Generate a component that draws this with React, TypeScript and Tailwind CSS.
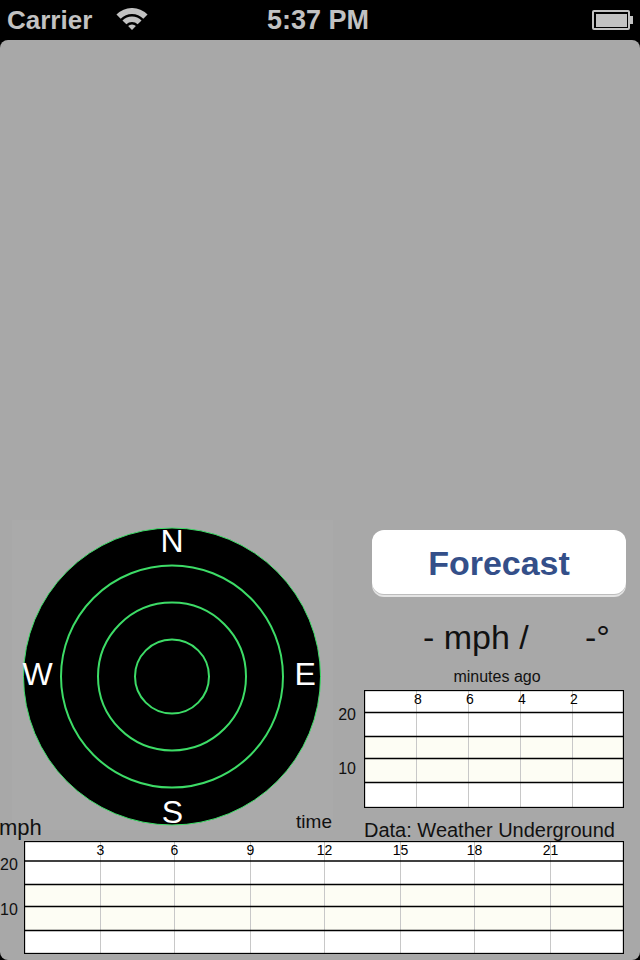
import React from "react";

function Wifi() {
  return (
    <svg width="32" height="22" viewBox="0 0 32 22" className="ml-[24px] mt-[-2px]">
      <path d="M0.44 6.44 A22 22 0 0 1 31.56 6.44 L27.31 10.69 A16 16 0 0 0 4.69 10.69 Z" fill="#c2c2c2" />
      <path d="M6.45 12.45 A13.5 13.5 0 0 1 25.55 12.45 L21.66 16.34 A8 8 0 0 0 10.34 16.34 Z" fill="#c2c2c2" />
      <path d="M16 22 L12.11 18.11 A5.5 5.5 0 0 1 19.89 18.11 Z" fill="#c2c2c2" />
    </svg>
  );
}

function Battery() {
  return (
    <div className="flex items-center mr-[7px]">
      <div className="w-[38px] h-[20px] border-2 border-[#c2c2c2] rounded-[2px] p-[1.5px]">
        <div className="w-full h-full bg-[#c2c2c2]" />
      </div>
      <div className="w-[3px] h-[8px] bg-[#c2c2c2]" />
    </div>
  );
}

function Compass() {
  const green = "#3ddc67";
  return (
    <svg width="321" height="310" viewBox="0 0 321 310" className="block">
      <circle cx="160" cy="156.5" r="148.5" fill="#000" stroke={green} strokeWidth="1" />
      <circle cx="160" cy="156.5" r="111" fill="none" stroke={green} strokeWidth="2" />
      <circle cx="160" cy="156.5" r="74" fill="none" stroke={green} strokeWidth="2" />
      <circle cx="160" cy="156.5" r="37" fill="none" stroke={green} strokeWidth="2" />
      <g fill="#fff" fontFamily="'Liberation Sans', Arial, sans-serif" fontSize="32">
        <text x="160" y="32" textAnchor="middle">N</text>
        <text x="10.5" y="165">W</text>
        <text x="282.5" y="165">E</text>
        <text x="160.5" y="302.5" textAnchor="middle">S</text>
      </g>
    </svg>
  );
}

function SmallChart() {
  const vx = [52.5, 104.5, 156.5, 208.5];
  const labels = ["8", "6", "4", "2"];
  const hy = [22.5, 46.5, 68.5, 92.5];
  return (
    <svg width="260" height="118" viewBox="0 0 260 118" className="block">
      <rect x="0.5" y="0.5" width="259" height="117" fill="#fff" />
      <rect x="1" y="46.5" width="258" height="46" fill="#fdfdf4" />
      {vx.map((x) => (
        <line key={x} x1={x} y1="1" x2={x} y2="117" stroke="#c8c8c8" strokeWidth="1" />
      ))}
      {hy.map((y) => (
        <line key={y} x1="0" y1={y} x2="260" y2={y} stroke="#000" strokeWidth="1.3" />
      ))}
      <rect x="0.5" y="0.5" width="259" height="117" fill="none" stroke="#000" strokeWidth="1.3" />
      <g fill="#000" fontFamily="'Liberation Sans', Arial, sans-serif" fontSize="14">
        {vx.map((x, i) => (
          <text key={x} x={x + 1.5} y="14" textAnchor="middle">
            {labels[i]}
          </text>
        ))}
      </g>
    </svg>
  );
}

function BigChart() {
  const vx = [76.5, 150.5, 226.5, 300.5, 376.5, 450.5, 526.5];
  const labels = ["3", "6", "9", "12", "15", "18", "21"];
  const hy = [20, 43.5, 65.5, 89.5];
  return (
    <svg width="600" height="113" viewBox="0 0 600 113" className="block">
      <rect x="0.5" y="0.5" width="599" height="112" fill="#fff" />
      <rect x="1" y="43.5" width="598" height="46" fill="#fdfdf4" />
      {vx.map((x) => (
        <line key={x} x1={x} y1="1" x2={x} y2="112" stroke="#c8c8c8" strokeWidth="1" />
      ))}
      {hy.map((y) => (
        <line key={y} x1="0" y1={y} x2="600" y2={y} stroke="#000" strokeWidth="1.3" />
      ))}
      <rect x="0.5" y="0.5" width="599" height="112" fill="none" stroke="#000" strokeWidth="1.3" />
      <g fill="#000" fontFamily="'Liberation Sans', Arial, sans-serif" fontSize="14">
        {vx.map((x, i) => (
          <text key={x} x={x} y="14" textAnchor="middle">
            {labels[i]}
          </text>
        ))}
      </g>
    </svg>
  );
}

export default function App() {
  return (
    <div className="w-[640px] h-[960px] bg-black flex flex-col overflow-hidden font-['Liberation_Sans',Arial,sans-serif]">
      {/* Status bar */}
      <div className="h-[40px] shrink-0 grid grid-cols-[1fr_auto_1fr] items-center text-[#c2c2c2] font-bold">
        <div className="flex items-center">
          <span className="ml-[7px] text-[26px] leading-[40px]">Carrier</span>
          <Wifi />
        </div>
        <span className="text-[27px] leading-[40px] mr-[4px]">5:37 PM</span>
        <div className="flex justify-end">
          <Battery />
        </div>
      </div>

      {/* Content */}
      <div className="flex-1 bg-[#a8a8a8] rounded-[8px] pt-[480px] flex flex-col">
        <div className="h-[321px] flex items-start">
          {/* Left column */}
          <div className="w-[333px] shrink-0 flex flex-col">
            <div className="relative ml-[12px] w-[321px] h-[310px] bg-[#aaaaaa]">
              <Compass />
              <span className="absolute top-[291px] right-[1px] text-[19px] leading-[22px] text-[#111]">time</span>
            </div>
            <span className="relative mt-[-15px] text-[22px] leading-[26px] text-[#111] ml-[-1px]">mph</span>
          </div>

          {/* Right column */}
          <div className="flex-1 flex flex-col pt-[10px]">
            <button className="ml-[39px] w-[254px] h-[64px] pt-[2px] bg-white rounded-[12px] shadow-[0_1px_0_#bdbdbd,0_3px_0_#e4e4e4] text-[34px] font-bold text-[#344f89] leading-[62px]">
              Forecast
            </button>
            <div className="mt-[25px] h-[36px] flex text-[34px] leading-[36px] text-[#111] whitespace-pre">
              <span className="ml-[90px] w-[162px]">- mph / </span>
              <span>-°</span>
            </div>
            <span className="mt-[13px] h-[18px] text-[16px] leading-[18px] text-[#111] text-center w-[328px]">
              minutes ago
            </span>
            <div className="mt-[4px] flex">
              <div className="w-[31px] flex flex-col items-end pr-[8px] pt-[15px] text-[16px] leading-[20px] text-[#111]">
                <span>20</span>
                <span className="mt-[34px]">10</span>
              </div>
              <SmallChart />
            </div>
            <span className="mt-[10px] ml-[31px] text-[20px] leading-[24px] text-[#111]">Data: Weather Underground</span>
          </div>
        </div>

        {/* Bottom chart */}
        <div className="flex">
          <div className="w-[24px] flex flex-col pt-[14px] text-[16px] leading-[20px] text-[#111]">
            <span>20</span>
            <span className="mt-[25px]">10</span>
          </div>
          <BigChart />
        </div>
      </div>
    </div>
  );
}
